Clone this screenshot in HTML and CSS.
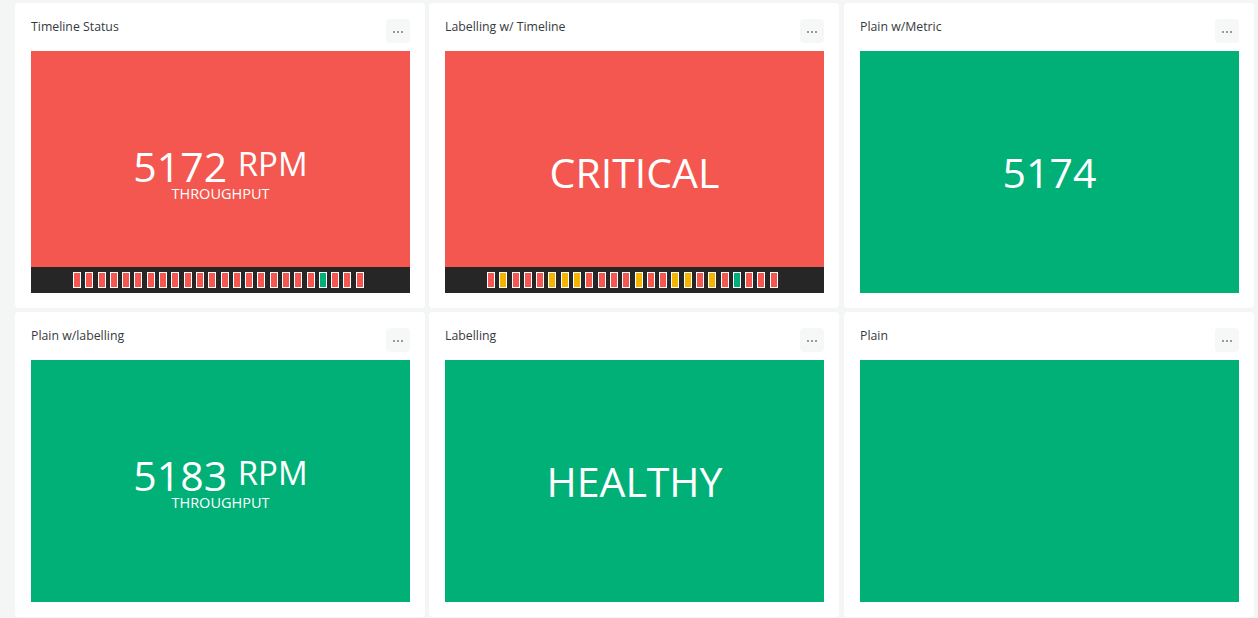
FILE: index.html
```html
<!DOCTYPE html>
<html>
<head>
<meta charset="utf-8">
<link rel="stylesheet" href="styles.css">
</head>
<body>
<div class="grid">
  <div class="card">
    <div class="card-head"><span class="card-title">Timeline Status</span><button class="more"><i></i><i></i><i></i></button></div>
    <div class="panel red">
      <div class="metric labelled"><div class="value">5172 <span class="unit">RPM</span></div><div class="label">THROUGHPUT</div></div>
      <div class="timeline">
        <span class="sq r"></span><span class="sq r"></span><span class="sq r"></span><span class="sq r"></span><span class="sq r"></span><span class="sq r"></span><span class="sq r"></span><span class="sq r"></span><span class="sq r"></span><span class="sq r"></span><span class="sq r"></span><span class="sq r"></span><span class="sq r"></span><span class="sq r"></span><span class="sq r"></span><span class="sq r"></span><span class="sq r"></span><span class="sq r"></span><span class="sq r"></span><span class="sq r"></span><span class="sq g"></span><span class="sq r"></span><span class="sq r"></span><span class="sq r"></span>
      </div>
    </div>
  </div>
  <div class="card">
    <div class="card-head"><span class="card-title">Labelling w/ Timeline</span><button class="more"><i></i><i></i><i></i></button></div>
    <div class="panel red">
      <div class="metric"><div class="value">CRITICAL</div></div>
      <div class="timeline">
        <span class="sq r"></span><span class="sq y"></span><span class="sq r"></span><span class="sq r"></span><span class="sq r"></span><span class="sq y"></span><span class="sq y"></span><span class="sq y"></span><span class="sq r"></span><span class="sq r"></span><span class="sq r"></span><span class="sq r"></span><span class="sq y"></span><span class="sq r"></span><span class="sq r"></span><span class="sq y"></span><span class="sq y"></span><span class="sq r"></span><span class="sq y"></span><span class="sq r"></span><span class="sq g"></span><span class="sq r"></span><span class="sq r"></span><span class="sq r"></span>
      </div>
    </div>
  </div>
  <div class="card wide">
    <div class="card-head"><span class="card-title">Plain w/Metric</span><button class="more"><i></i><i></i><i></i></button></div>
    <div class="panel green">
      <div class="metric"><div class="value">5174</div></div>
    </div>
  </div>
  <div class="card">
    <div class="card-head"><span class="card-title">Plain w/labelling</span><button class="more"><i></i><i></i><i></i></button></div>
    <div class="panel green">
      <div class="metric labelled"><div class="value">5183 <span class="unit">RPM</span></div><div class="label">THROUGHPUT</div></div>
    </div>
  </div>
  <div class="card">
    <div class="card-head"><span class="card-title">Labelling</span><button class="more"><i></i><i></i><i></i></button></div>
    <div class="panel green">
      <div class="metric"><div class="value">HEALTHY</div></div>
    </div>
  </div>
  <div class="card wide">
    <div class="card-head"><span class="card-title">Plain</span><button class="more"><i></i><i></i><i></i></button></div>
    <div class="panel green"></div>
  </div>
</div>
</body>
</html>
```
FILE: styles.css
```css
html, body {
  margin: 0;
  padding: 0;
  background: #f4f5f5;
  font-family: "Open Sans", "Noto Sans", sans-serif;
  overflow: hidden;
}
.grid {
  display: grid;
  grid-template-columns: 410px 410px 411px;
  grid-template-rows: 305px 305px;
  column-gap: 4px;
  row-gap: 4px;
  padding: 3px 0 0 15px;
}
.card {
  background: #fff;
  border-radius: 4px;
  padding: 16px 15px 15px 16px;
  display: flex;
  flex-direction: column;
}
.card.wide {
  margin-left: 1px;
}
.card-head {
  height: 32px;
  display: flex;
  justify-content: space-between;
  align-items: flex-start;
}
.card-title {
  font-size: 12.3px;
  line-height: 16px;
  color: #363a3c;
}
.more {
  width: 24px;
  height: 24px;
  border: none;
  border-radius: 4px;
  background: #f6f7f7;
  margin: 0;
  display: flex;
  align-items: center;
  justify-content: center;
  gap: 2px;
  padding: 2px 0 0 0;
}
.more i {
  width: 2px;
  height: 2px;
  background: #9a9a9a;
  display: block;
}
.panel {
  position: relative;
  height: 242px;
  display: flex;
  align-items: center;
  justify-content: center;
  color: #fff;
}
.red { background: #f3574f; }
.green { background: #00b077; }
.metric {
  text-align: center;
  line-height: 1;
}
.metric.labelled {
  padding-top: 3px;
}
.value {
  font-size: 41px;
  line-height: 1;
  white-space: nowrap;
}
.unit {
  font-size: 33px;
  vertical-align: 6px;
  line-height: 0.8;
}
.label {
  font-size: 14.5px;
  line-height: 1;
}
.timeline {
  position: absolute;
  left: 0;
  right: 0;
  bottom: 0;
  height: 26px;
  background: #262626;
  display: flex;
  align-items: center;
  justify-content: center;
}
.sq {
  box-sizing: border-box;
  width: 8px;
  height: 16px;
  border: 1px solid #fff;
  margin-right: 4.3px;
}
.sq.r { background: #f3574f; }
.sq.y { background: #f5b400; }
.sq.g { background: #00b077; }
```
